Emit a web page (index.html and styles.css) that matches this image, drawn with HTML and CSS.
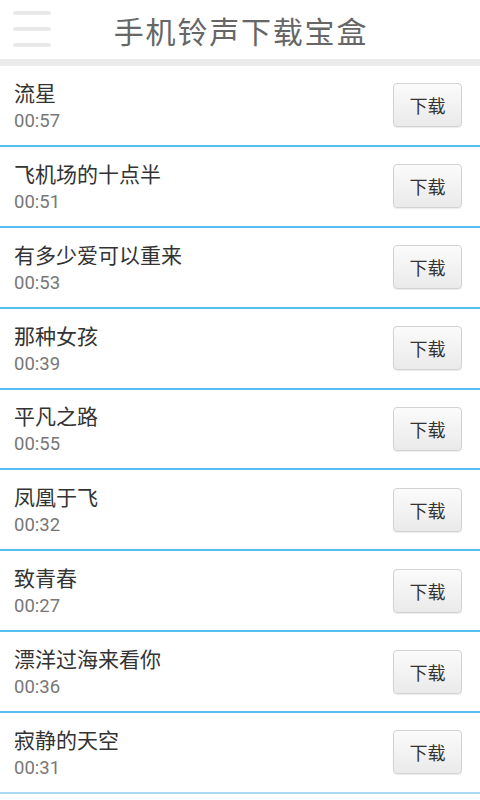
FILE: index.html
```html
<!DOCTYPE html>
<html lang="zh-CN">
<head>
<meta charset="utf-8">
<title>手机铃声下载宝盒</title>
<link rel="stylesheet" href="styles.css">
</head>
<body>
<header class="topbar">
  <div class="menu" aria-label="菜单"><span></span><span></span><span></span></div>
  <h1 class="title">手机铃声下载宝盒</h1>
  <div class="spacer"></div>
</header>
<ul class="list">
  <li class="row"><div class="info"><div class="name">流星</div><div class="time">00:57</div></div><button class="dl">下载</button></li>
  <li class="row"><div class="info"><div class="name">飞机场的十点半</div><div class="time">00:51</div></div><button class="dl">下载</button></li>
  <li class="row"><div class="info"><div class="name">有多少爱可以重来</div><div class="time">00:53</div></div><button class="dl">下载</button></li>
  <li class="row"><div class="info"><div class="name">那种女孩</div><div class="time">00:39</div></div><button class="dl">下载</button></li>
  <li class="row"><div class="info"><div class="name">平凡之路</div><div class="time">00:55</div></div><button class="dl">下载</button></li>
  <li class="row"><div class="info"><div class="name">凤凰于飞</div><div class="time">00:32</div></div><button class="dl">下载</button></li>
  <li class="row"><div class="info"><div class="name">致青春</div><div class="time">00:27</div></div><button class="dl">下载</button></li>
  <li class="row"><div class="info"><div class="name">漂洋过海来看你</div><div class="time">00:36</div></div><button class="dl">下载</button></li>
  <li class="row last"><div class="info"><div class="name">寂静的天空</div><div class="time">00:31</div></div><button class="dl">下载</button></li>
</ul>
</body>
</html>
```
FILE: styles.css
```css
html, body {
  margin: 0;
  padding: 0;
  background: #ffffff;
  font-family: "Roboto", "Noto Sans CJK SC", sans-serif;
  overflow: hidden;
}
.topbar {
  height: 59px;
  display: grid;
  grid-template-columns: 64px 1fr 64px;
  align-items: center;
  border-bottom: 7px solid #ebebeb;
}
.menu {
  display: flex;
  flex-direction: column;
  gap: 12px;
  padding-left: 13px;
  margin-top: -1px;
}
.menu span {
  display: block;
  width: 38px;
  height: 4px;
  border-radius: 2px;
  background: #e9e9e9;
}
.title {
  margin: 0;
  text-align: center;
  font-family: "Noto Sans CJK SC", sans-serif;
  font-weight: normal;
  font-size: 30px;
  letter-spacing: 1.8px;
  padding-left: 2px;
  color: #666666;
  line-height: 40px;
}
.list {
  list-style: none;
  margin: 0;
  padding: 0;
}
.row {
  height: 78.875px;
  display: flex;
  align-items: center;
  justify-content: space-between;
  padding: 0 18px 0 14px;
  border-bottom: 2px solid #57bef0;
}
.row.last {
  border-bottom-color: #a8dbf6;
}
.info {
  display: flex;
  flex-direction: column;
  padding-top: 2px;
}
.name {
  font-size: 21px;
  line-height: 27px;
  color: #333333;
  font-family: "Noto Sans CJK SC", sans-serif;
}
.time {
  font-size: 18.5px;
  line-height: 26px;
  color: #777777;
  margin-top: 2px;
}
.dl {
  width: 69px;
  height: 44px;
  border: 1px solid #d2d2d2;
  border-radius: 4px;
  background: linear-gradient(#fbfbfb, #eaeaea);
  box-shadow: 0 1px 1px rgba(0, 0, 0, 0.08);
  font-family: "Noto Sans CJK SC", sans-serif;
  font-size: 18px;
  color: #333333;
  padding: 0;
}
```
